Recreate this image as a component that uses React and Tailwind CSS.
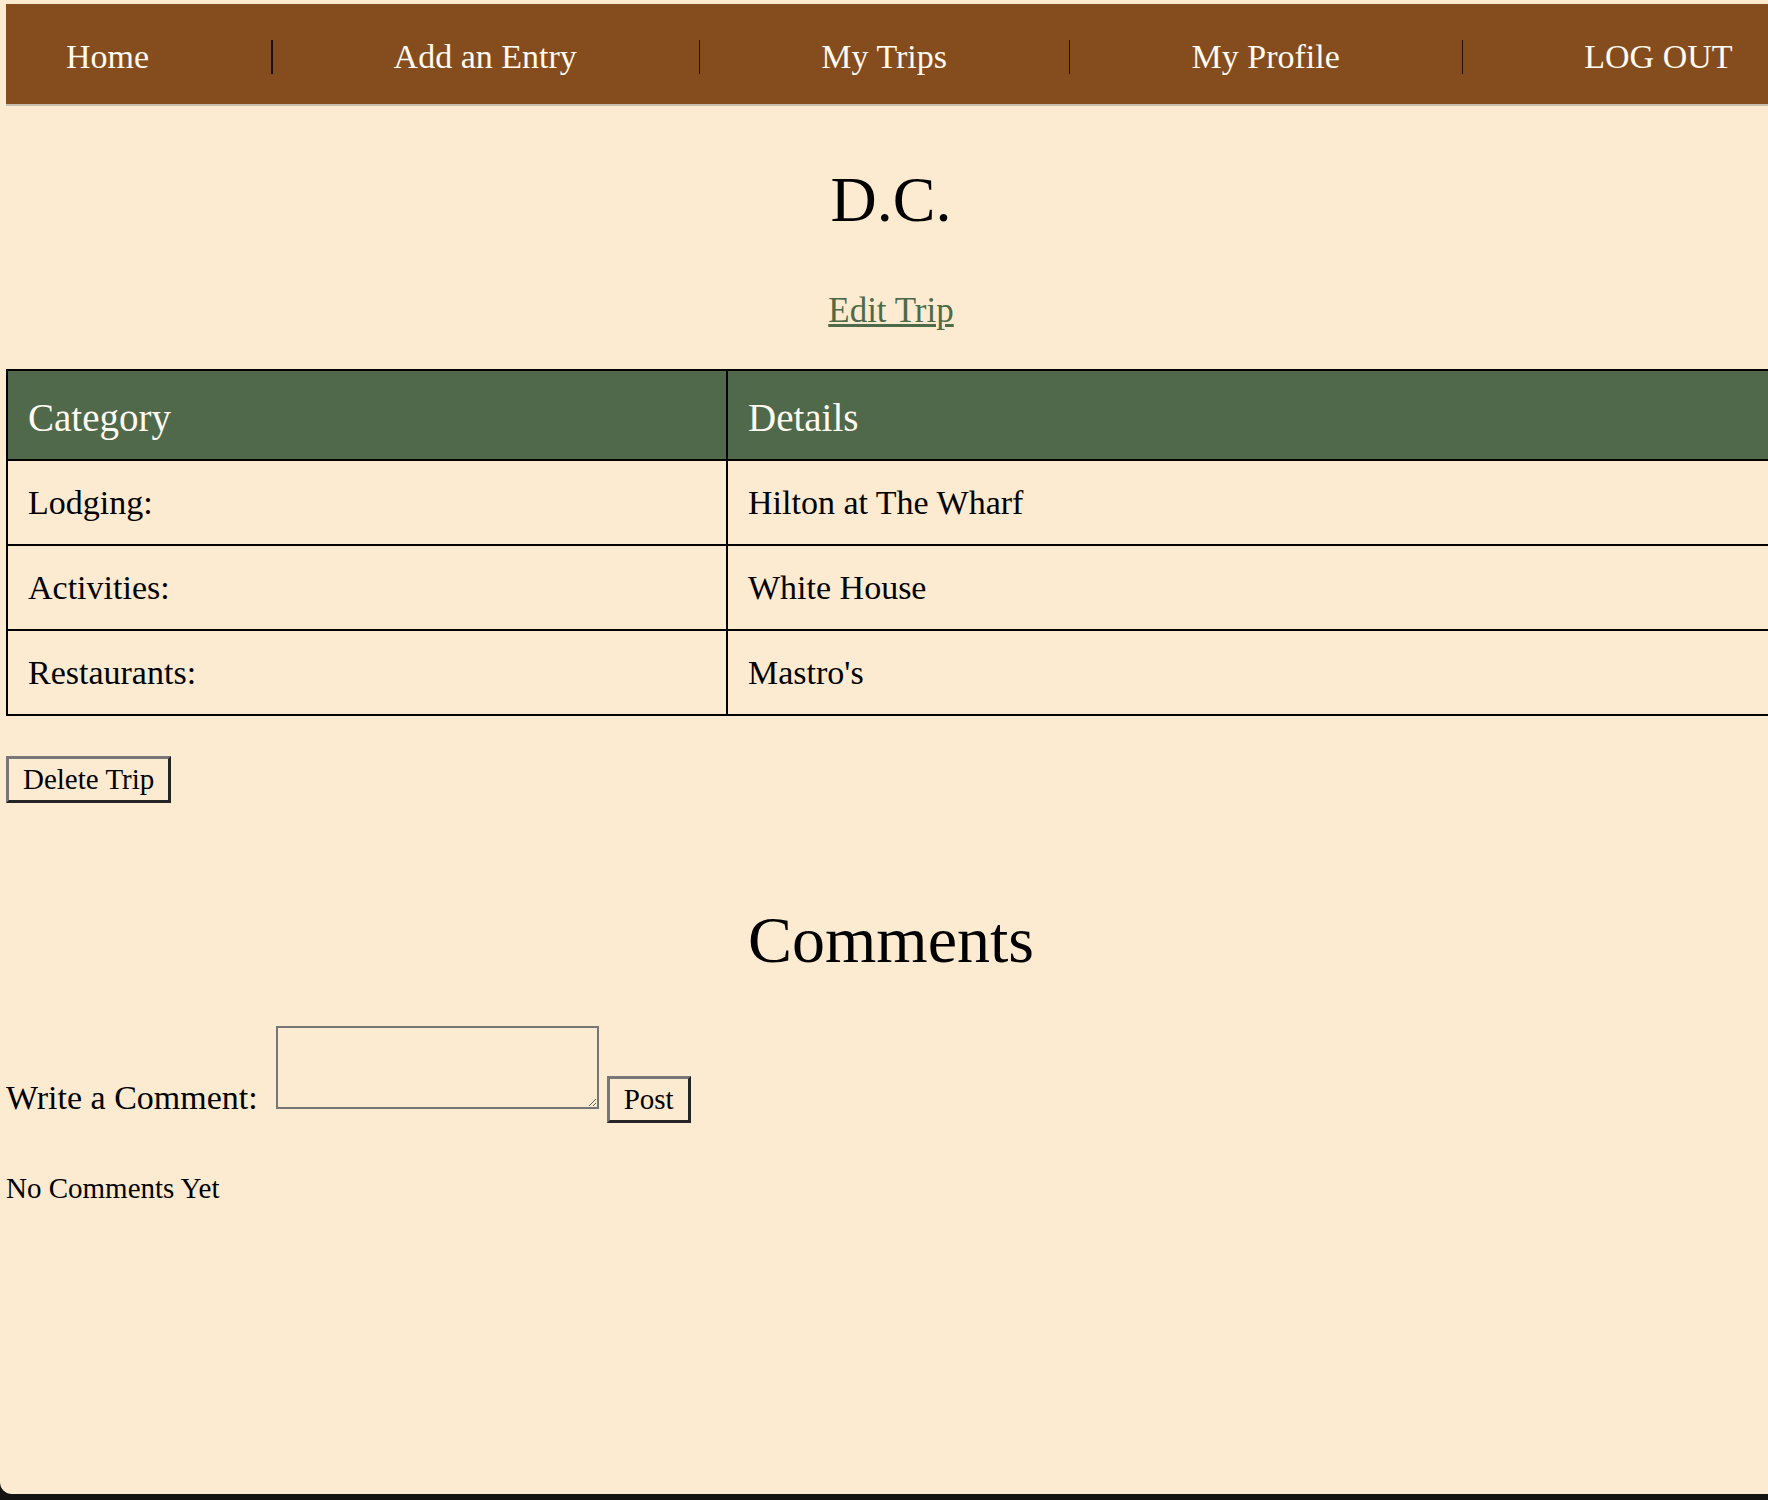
import React from 'react';

const navLinks = ['Home', 'Add an Entry', 'My Trips', 'My Profile', 'LOG OUT'];

const tripRows = [
  { label: 'Lodging:', value: 'Hilton at The Wharf' },
  { label: 'Activities:', value: 'White House' },
  { label: 'Restaurants:', value: "Mastro's" },
];

function NavBar() {
  return (
    <nav className="flex h-[100px] items-center bg-[#854d1e] pt-[6px] text-[34px] leading-[34px] text-[#fffaf2] shadow-[0_2px_0_#c7beb2]">
      {navLinks.map((link, i) => (
        <React.Fragment key={link}>
          {i > 0 && <span className="ml-[62px] mr-[61px] h-[34px] w-[1.5px] shrink-0 bg-[#1c1008]" />}
          <a href="#" className="shrink-0 whitespace-nowrap px-[60px]">
            {link}
          </a>
        </React.Fragment>
      ))}
    </nav>
  );
}

function TripTable() {
  return (
    <table className="mt-[41px] w-full border-separate border-spacing-0 border-l-2 border-t-2 border-black text-left">
      <thead>
        <tr className="bg-[#50694a] text-[39px] leading-[39px] text-[#fffaf2]">
          <th className="w-[720px] border-b-2 border-r-2 border-black px-[20px] pb-[22px] pt-[27px] font-normal">Category</th>
          <th className="border-b-2 border-r-2 border-black px-[20px] pb-[22px] pt-[27px] font-normal">Details</th>
        </tr>
      </thead>
      <tbody className="text-[34px] leading-[34px]">
        {tripRows.map((row) => (
          <tr key={row.label}>
            <td className="border-b-2 border-r-2 border-black px-[20px] pb-[24px] pt-[25px]">{row.label}</td>
            <td className="border-b-2 border-r-2 border-black px-[20px] pb-[24px] pt-[25px]">{row.value}</td>
          </tr>
        ))}
      </tbody>
    </table>
  );
}

const btnClass =
  'border-[3px] border-b-[#252525] border-l-[#777777] border-r-[#252525] border-t-[#777777] bg-transparent px-[14px] py-[4px] text-[29px] leading-[33px] text-black';

export default function App() {
  return (
    <div className="flex h-[1500px] w-full flex-col overflow-hidden bg-[#131313] font-['Liberation_Serif',serif] text-black">
      <div className="flex-1 overflow-hidden rounded-bl-[12px] bg-[#fdebd1] pl-[6px] pt-[4px]">
        <div className="w-[1770px]">
          <NavBar />

          <h1 className="mt-[64px] text-center text-[64px] font-normal leading-[64px]">D.C.</h1>
          <p className="mt-[61px] text-center text-[35px] leading-[35px]">
            <a href="#" className="text-[#4f6a48] underline decoration-[3px] underline-offset-[2px]">
              Edit Trip
            </a>
          </p>

          <TripTable />

          <div className="mt-[40px] flex">
            <button className={btnClass}>Delete Trip</button>
          </div>

          <h2 className="mt-[105px] text-center text-[66px] font-normal leading-[64px]">Comments</h2>

          <form className="mt-[54px] text-[34px] leading-[34px]" onSubmit={(e) => e.preventDefault()}>
            <label htmlFor="comment">Write a Comment:</label>
            <textarea
              id="comment"
              className="ml-[18px] h-[83px] w-[323px] border-2 border-[#767676] bg-transparent align-baseline"
            />
            <button type="submit" className={`ml-[8px] align-baseline ${btnClass}`}>
              Post
            </button>
          </form>

          <p className="mt-[51px] text-[29px] leading-[29px]">No Comments Yet</p>
        </div>
      </div>
      <div className="h-[6px] shrink-0" />
    </div>
  );
}
